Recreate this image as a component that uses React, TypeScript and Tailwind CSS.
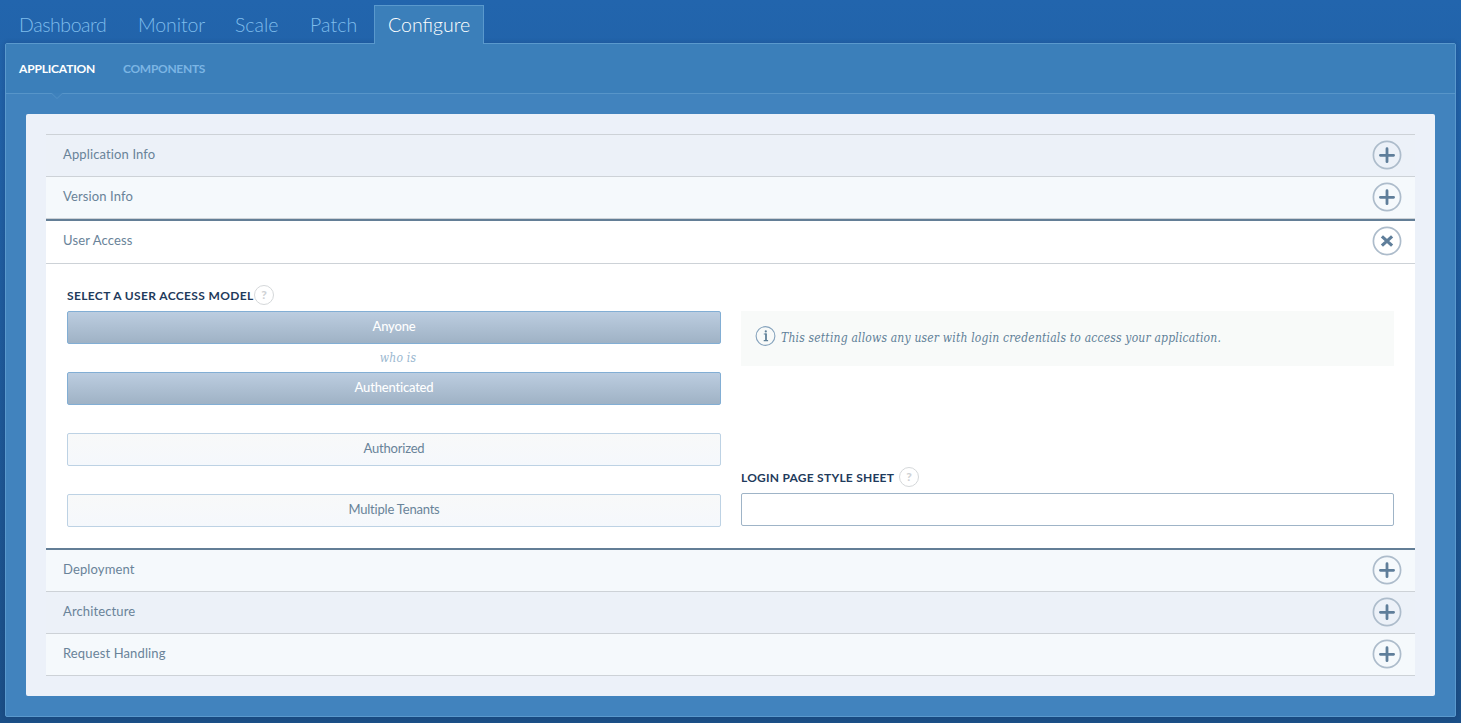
import React from "react";

const sans = "font-['Lato','Open_Sans',sans-serif]";
const serif = "font-['DejaVu_Serif_Condensed','DejaVu_Serif',serif]";

function ToggleIcon({ open = false }: { open?: boolean }) {
  return (
    <svg width="30" height="30" viewBox="0 0 30 30" fill="none" className="mb-[2px] shrink-0">
      <circle cx="15" cy="15" r="13.6" stroke="#adbccb" strokeWidth="1.7" />
      {open ? (
        <path d="M9.9 10.4l10.2 9.2M20.1 10.4l-10.2 9.2" stroke="#5f7e9a" strokeWidth="3.2" />
      ) : (
        <path d="M15 8.7v13M8.4 15.3h13.2" stroke="#5f7e9a" strokeWidth="2.8" strokeLinecap="round" />
      )}
    </svg>
  );
}

function Help() {
  return (
    <span className="flex h-5 w-5 shrink-0 items-center justify-center rounded-full border border-[#d5d8da] text-[12px] leading-none font-black tracking-normal text-[#cfd2d5]">
      ?
    </span>
  );
}

function Row({ title, shade = "light", open = false }: { title: string; shade?: "light" | "tint"; open?: boolean }) {
  return (
    <div
      className={
        "flex items-center justify-between border-b border-[#cdd2d7] pr-[13px] pl-[17px] " +
        (open ? "h-[43px] bg-white" : shade === "tint" ? "h-[42px] bg-[#ecf1f8]" : "h-[42px] bg-[#f5f9fc]")
      }
    >
      <span className="pb-[4px] text-[13px] leading-5 tracking-[0.13px] text-[#698399]">{title}</span>
      <ToggleIcon open={open} />
    </div>
  );
}

function Choice({ label, active = false }: { label: string; active?: boolean }) {
  return (
    <button
      className={
        "flex h-[33px] w-full items-center justify-center rounded-[2px] border pb-[2px] text-[13px] tracking-[-0.2px] " +
        (active
          ? "border-[#82aed4] bg-linear-to-b from-[#bccde0] to-[#9fb2c5] font-medium text-white"
          : "border-[#bdd2e4] bg-linear-to-b from-[#f8f9f9] to-[#f5f8fc] text-[#698399]")
      }
    >
      {label}
    </button>
  );
}

function NavItem({ label, className }: { label: string; className: string }) {
  return <span className={"shrink-0 whitespace-nowrap " + className}>{label}</span>;
}

export default function App() {
  return (
    <div className={"flex h-[723px] w-[1461px] flex-col overflow-hidden bg-linear-to-b from-[#2265ad] to-[#1b4f87] px-[5px] " + sans}>
      <nav className="flex h-[43px] shrink-0 pt-[5px] pl-[14px] text-[19.5px] leading-[39px] font-light text-[#7fbdec]">
        <NavItem label="Dashboard" className="w-[119px] tracking-[-0.42px]" />
        <NavItem label="Monitor" className="w-[97px] tracking-[-0.1px]" />
        <NavItem label="Scale" className="w-[75px]" />
        <NavItem label="Patch" className="w-[64px] tracking-[0.1px]" />
        <div className="z-10 -mb-px h-[39px] w-[110px] border border-b-0 border-[#5a99cd] bg-[#3b7fba] pl-[13px] leading-[37px] text-white">
          <NavItem label="Configure" className="" />
        </div>
      </nav>

      <div className="flex h-[674px] w-[1451px] shrink-0 flex-col rounded-[2px] border border-[#5a99cd] bg-[#4183be] shadow-[0_0_5px_rgba(0,20,60,0.2)]">
        <div className="relative flex h-[50px] shrink-0 items-center border-b border-[#5795c9] bg-[#3b7fba] pl-[13px] text-[12px] font-bold">
          <span className="w-[104px] tracking-[-0.18px] text-white">APPLICATION</span>
          <span className="tracking-[-0.3px] text-[#7bb5e4]">COMPONENTS</span>
          <svg width="12" height="7" viewBox="0 0 12 7" className="absolute top-[49px] left-[45px]">
            <path d="M.5 0h11L6 5.5z" fill="#3e81bc" />
            <path d="M.8.5L6 5.5L11.2.5" fill="none" stroke="#5795c9" strokeOpacity=".8" />
          </svg>
        </div>

        <main className="mx-5 mt-5 h-[582px] rounded-[2px] bg-[#ecf1f9] px-5 pt-5">
          <div className="border-t border-[#cdd2d7]">
            <Row title="Application Info" shade="tint" />
            <Row title="Version Info" />
            <section className="border-y-2 border-[#637e96] bg-white">
              <Row title="User Access" open />
              <div className="flex h-[284px] gap-5 px-[21px] pt-[21px]">
                <div className="w-[654px]">
                  <div className="flex h-5 items-center text-[12px] font-bold tracking-[0.36px] text-[#1f3b5c]">
                    <span className="w-[187px] pt-px whitespace-nowrap">SELECT A USER ACCESS MODEL</span>
                    <Help />
                  </div>
                  <div className="mt-[6px]">
                    <Choice label="Anyone" active />
                    <div className={"flex h-7 items-center justify-center pl-2 text-[12px] tracking-[0.25px] text-[#9bb8d0] italic " + serif}>who is</div>
                    <Choice label="Authenticated" active />
                  </div>
                  <div className="mt-7 flex flex-col gap-7">
                    <Choice label="Authorized" />
                    <Choice label="Multiple Tenants" />
                  </div>
                </div>

                <div className="w-[653px]">
                  <div className="mt-[26px] flex h-[55px] items-start bg-[#f8faf9] pt-[15px] pl-[14px]">
                    <svg width="21" height="21" viewBox="0 0 21 21" fill="none" className="shrink-0">
                      <circle cx="10.5" cy="10" r="9.4" stroke="#86a3bd" strokeWidth="1.1" />
                      <path d="M8.8 8h2.6M8.7 14.6h4.4" stroke="#5f8098" strokeWidth="1.1" />
                      <path d="M11 7.5v7.2" stroke="#5f8098" strokeWidth="1.8" />
                      <circle cx="10.8" cy="5.4" r="1.1" fill="#5f8098" />
                    </svg>
                    <p className={"pt-[2px] pl-[5px] text-[12px] leading-5 tracking-[0.19px] whitespace-nowrap text-[#5f8098] italic " + serif}>
                      This setting allows any user with login credentials to access your application.
                    </p>
                  </div>
                  <div className="mt-[101px] flex h-5 items-center text-[12px] font-bold tracking-[0.24px] text-[#1f3b5c]">
                    <span className="w-[158px] pt-px whitespace-nowrap">LOGIN PAGE STYLE SHEET</span>
                    <Help />
                  </div>
                  <input
                    aria-label="Login page style sheet"
                    className="mt-[6px] block h-[33px] w-full rounded-[2px] border border-[#9fb4c7] bg-white px-2 text-[13px] outline-none"
                  />
                </div>
              </div>
            </section>
            <Row title="Deployment" />
            <Row title="Architecture" shade="tint" />
            <Row title="Request Handling" />
          </div>
        </main>
      </div>
    </div>
  );
}
